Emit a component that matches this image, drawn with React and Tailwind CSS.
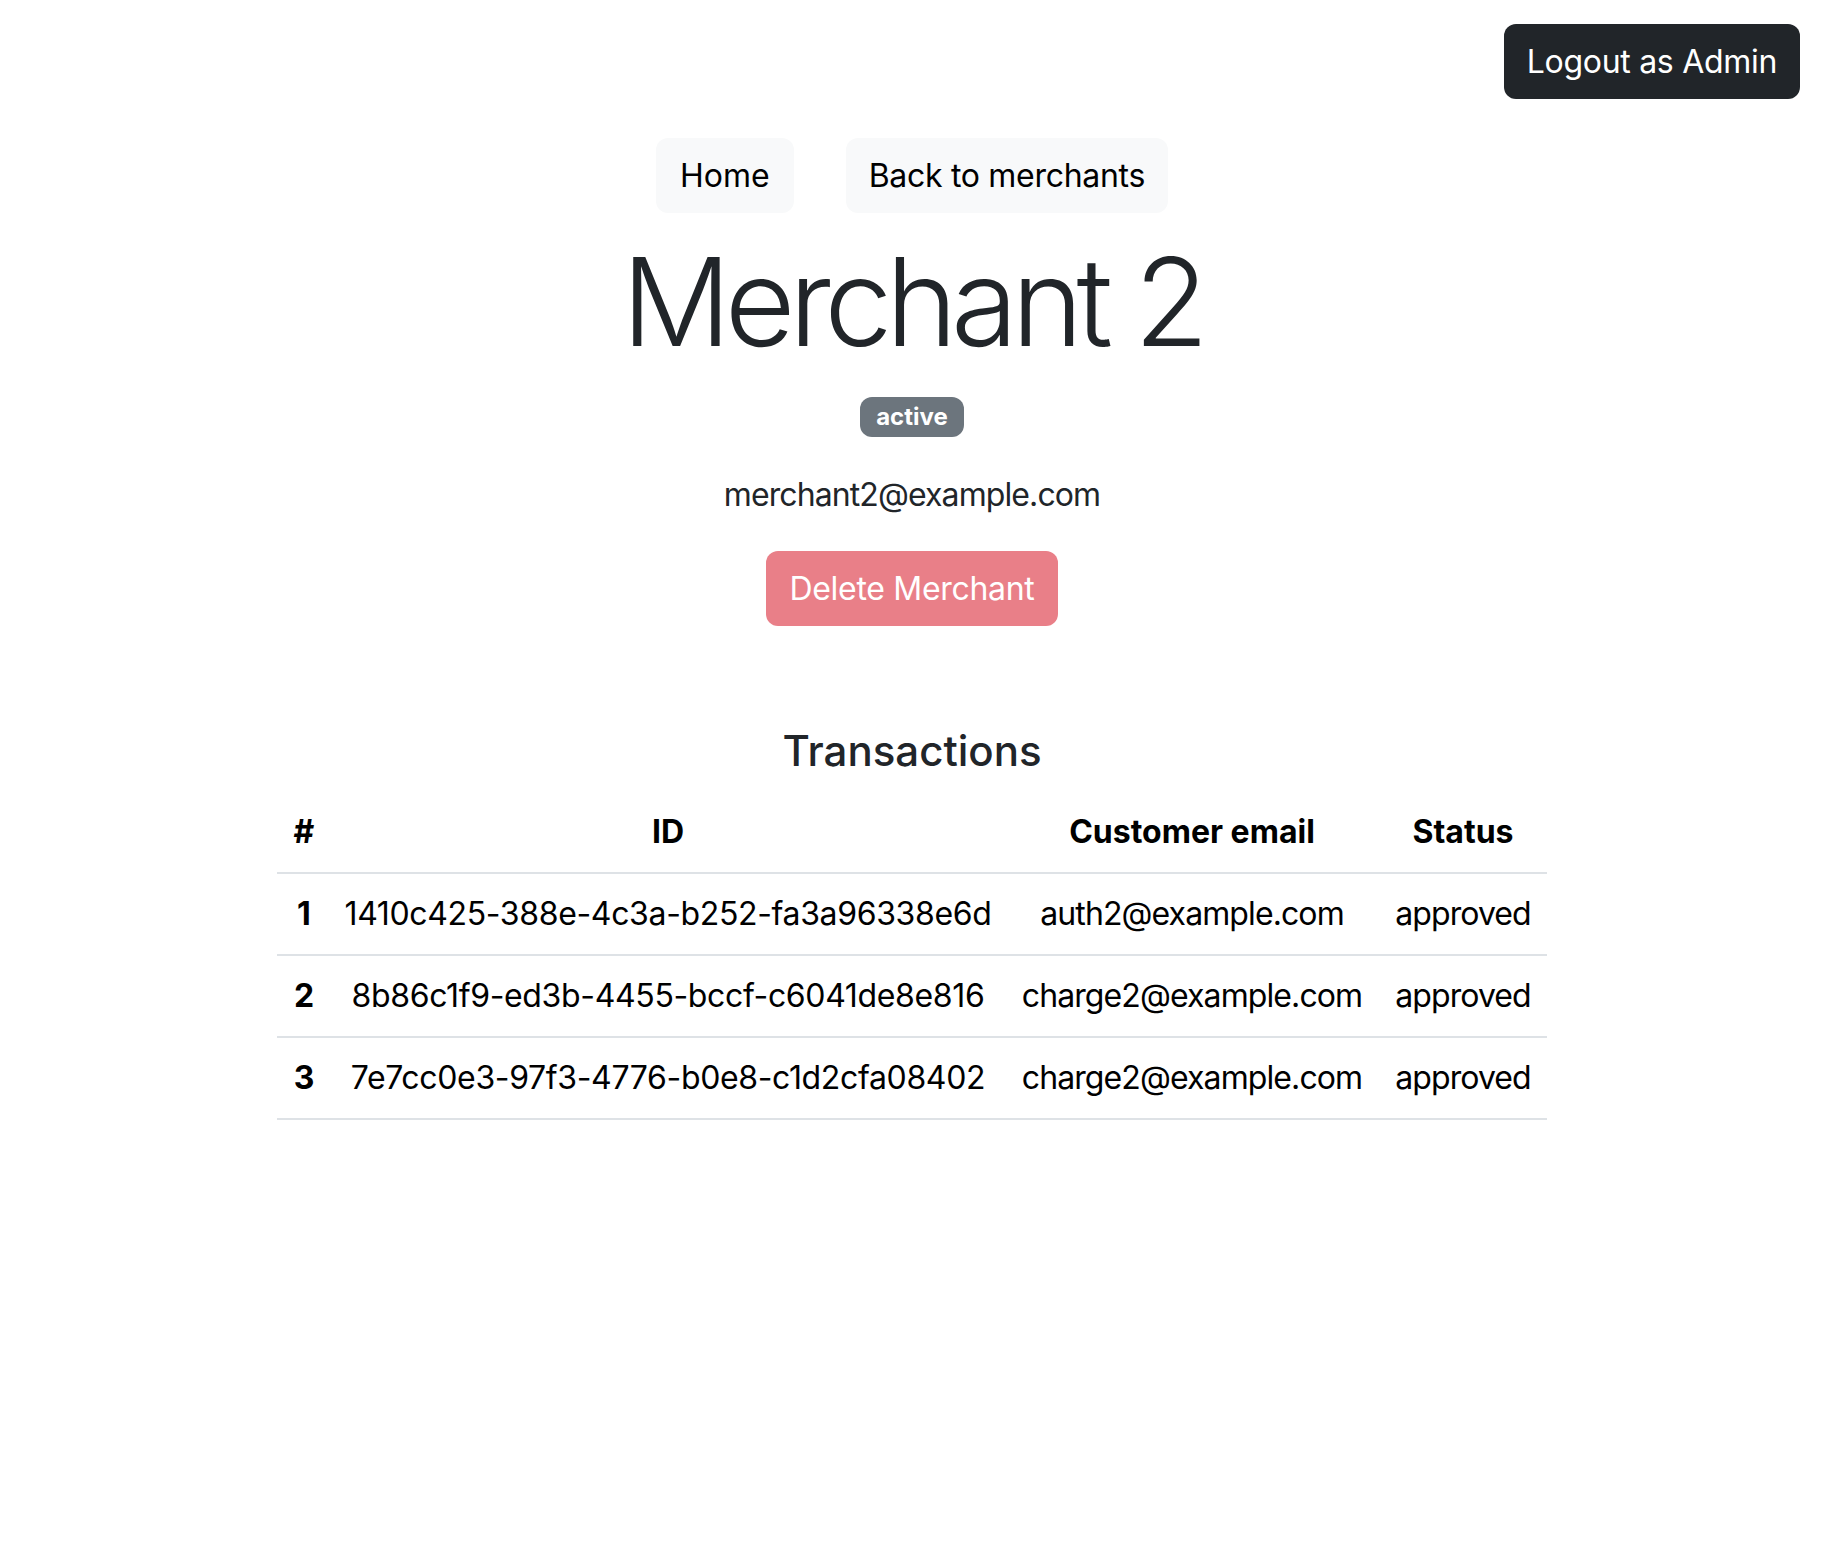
const transactions = [
  { id: '1410c425-388e-4c3a-b252-fa3a96338e6d', email: 'auth2@example.com', status: 'approved' },
  { id: '8b86c1f9-ed3b-4455-bccf-c6041de8e816', email: 'charge2@example.com', status: 'approved' },
  { id: '7e7cc0e3-97f3-4776-b0e8-c1d2cfa08402', email: 'charge2@example.com', status: 'approved' },
];

const App = () => {
  return (
    <div className="min-h-screen bg-white text-[#212529] font-['Inter','Noto_Sans',sans-serif]">
      <div className="flex justify-end pt-[24px] pr-[24px]">
        <button className="h-[75px] px-[23px] rounded-[12px] bg-[#212529] text-white text-[32px] leading-[48px] tracking-[-0.3px]">
          Logout as Admin
        </button>
      </div>

      <div className="flex justify-center gap-[52px] mt-[39px]">
        <button className="h-[75px] px-[24px] rounded-[12px] bg-[#f8f9fa] text-black text-[32px] leading-[48px]">
          Home
        </button>
        <button className="h-[75px] px-[23px] rounded-[12px] bg-[#f8f9fa] text-black text-[32px] leading-[48px] tracking-[-0.3px]">
          Back to merchants
        </button>
      </div>

      <div className="flex flex-col items-center">
        <h1 className="mt-[16px] text-[122px] leading-[1.2] font-light tracking-[-6.6px]">Merchant 2</h1>
        <span className="mt-[22px] h-[40px] px-[16px] flex items-center rounded-[12px] bg-[#6c757d] text-white text-[24px] font-bold">
          active
        </span>
        <p className="mt-[34px] text-[32px] leading-[48px] tracking-[-0.9px]">merchant2@example.com</p>
        <button className="mt-[32px] h-[75px] px-[23px] rounded-[12px] bg-[#e97f88] text-white text-[32px] leading-[48px] tracking-[-0.3px]">
          Delete Merchant
        </button>
        <h3 className="mt-[100px] text-[42px] leading-[1.2] font-medium">Transactions</h3>

        <table className="mt-[15px] w-[1270px] text-center text-black text-[32px] leading-[48px] border-collapse whitespace-nowrap">
          <thead>
            <tr className="border-b-2 border-[#dee2e6]">
              <th className="w-[54px] py-[16px] px-[8px] font-bold">#</th>
              <th className="w-[674px] py-[16px] px-[8px] font-bold">ID</th>
              <th className="w-[374px] py-[16px] px-[8px] font-bold">Customer email</th>
              <th className="w-[168px] py-[16px] px-[8px] font-bold">Status</th>
            </tr>
          </thead>
          <tbody>
            {transactions.map((t, i) => (
              <tr key={t.id} className="border-b-2 border-[#dee2e6]">
                <th className="py-[16px] px-[8px] font-bold">{i + 1}</th>
                <td className="py-[16px] px-[8px] tracking-[-0.35px]">{t.id}</td>
                <td className="py-[16px] px-[8px] tracking-[-0.9px]">{t.email}</td>
                <td className="py-[16px] px-[8px] tracking-[-0.9px]">{t.status}</td>
              </tr>
            ))}
          </tbody>
        </table>
      </div>
    </div>
  );
};

export default App;
